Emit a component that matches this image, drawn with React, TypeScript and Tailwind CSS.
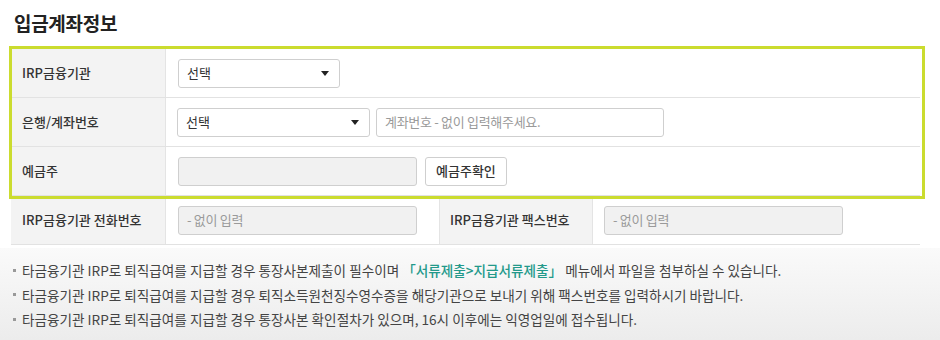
import React from 'react';

const font = { fontFamily: '"Noto Sans CJK KR", "Noto Sans", sans-serif' };

const Select: React.FC<{ className: string }> = ({ className }) => (
    <div className={`flex items-center justify-between h-[29px] border border-[#cfcfcf] rounded-[3px] bg-white pl-[8px] pr-[10px] text-[13px] text-[#333] ${className}`}>
        <span>선택</span>
        <svg width="8" height="5" viewBox="0 0 8 5"><path d="M0 0h8L4 5z" fill="#222" /></svg>
    </div>
);

const Field: React.FC<{ className: string; placeholder?: string; disabled?: boolean }> = ({ className, placeholder, disabled }) => (
    <div className={`flex items-center h-[29px] border border-[#cfcfcf] rounded-[3px] px-[8px] text-[13px] text-[#9a9a9a] tracking-[-0.3px] ${disabled ? 'bg-[#f1f1f1]' : 'bg-white'} ${className}`}>
        {placeholder}
    </div>
);

const Label: React.FC<{ children: React.ReactNode }> = ({ children }) => (
    <div className="flex items-center h-full bg-[#f3f3f3] border-r border-[#e4e4e4] pl-[11px] text-[13px] font-medium text-[#333]">
        {children}
    </div>
);

const Bullet: React.FC<{ children: React.ReactNode }> = ({ children }) => (
    <li className="flex items-center">
        <span className="w-[3px] h-[3px] bg-[#999] mr-[6px] shrink-0" />
        <span>{children}</span>
    </li>
);

const App: React.FC = () => {
    return (
        <div className="w-[940px] h-[340px] bg-white relative overflow-hidden" style={font}>
            <h2 className="pl-[14px] pt-[9px] h-[49px] text-[19px] font-bold text-[#222] tracking-[-0.3px]">입금계좌정보</h2>

            <div className="relative ml-[11px] w-[909px]">
                <div className="grid grid-cols-[155px_1fr] h-[49px] border-b border-[#e2e2e2]">
                    <Label>IRP금융기관</Label>
                    <div className="flex items-center pl-[12px]">
                        <Select className="w-[162px]" />
                    </div>
                </div>
                <div className="grid grid-cols-[155px_1fr] h-[49px] border-b border-[#e2e2e2]">
                    <Label>은행/계좌번호</Label>
                    <div className="flex items-center pl-[11px] gap-[6px]">
                        <Select className="w-[193px]" />
                        <Field className="w-[288px]" placeholder="계좌번호 - 없이 입력해주세요." />
                    </div>
                </div>
                <div className="grid grid-cols-[155px_1fr] h-[49px] border-b border-[#e2e2e2]">
                    <Label>예금주</Label>
                    <div className="flex items-center pl-[12px] gap-[8px]">
                        <Field className="w-[239px]" disabled />
                        <button className="h-[29px] px-[10px] border border-[#cfcfcf] rounded-[3px] bg-white text-[13px] font-medium text-[#333]">예금주확인</button>
                    </div>
                </div>
                <div className="grid grid-cols-[155px_273px_154px_1fr] h-[49px] border-b border-[#e2e2e2]">
                    <Label>IRP금융기관 전화번호</Label>
                    <div className="flex items-center pl-[12px]">
                        <Field className="w-[239px]" placeholder="- 없이 입력" disabled />
                    </div>
                    <div className="flex items-center h-full bg-[#f3f3f3] border-x border-[#e4e4e4] pl-[10px] text-[13px] font-medium text-[#333]">IRP금융기관 팩스번호</div>
                    <div className="flex items-center pl-[11px]">
                        <Field className="w-[239px]" placeholder="- 없이 입력" disabled />
                    </div>
                </div>

                {/* highlight box over the first three rows */}
                <div className="absolute left-[-2px] top-[-3px] w-[916px] h-[153px] border-[3px] border-[#cbdc2f] pointer-events-none" />
            </div>

            <div className="absolute left-0 right-0 top-[248px] bottom-0 bg-gradient-to-b from-[#fafafa] to-[#ececec]" />
            <ul className="relative mt-[13px] pl-[13px] text-[13.6px] text-[#444] leading-[24.5px]">
                <Bullet>
                    타금융기관 IRP로 퇴직급여를 지급할 경우 통장사본제출이 필수이며 <span className="text-[#22998a] font-medium">「서류제출&gt;지급서류제출」</span> 메뉴에서 파일을 첨부하실 수 있습니다.
                </Bullet>
                <Bullet>타금융기관 IRP로 퇴직급여를 지급할 경우 퇴직소득원천징수영수증을 해당기관으로 보내기 위해 팩스번호를 입력하시기 바랍니다.</Bullet>
                <Bullet>타금융기관 IRP로 퇴직급여를 지급할 경우 통장사본 확인절차가 있으며, 16시 이후에는 익영업일에 접수됩니다.</Bullet>
            </ul>
        </div>
    );
};

export default App;
